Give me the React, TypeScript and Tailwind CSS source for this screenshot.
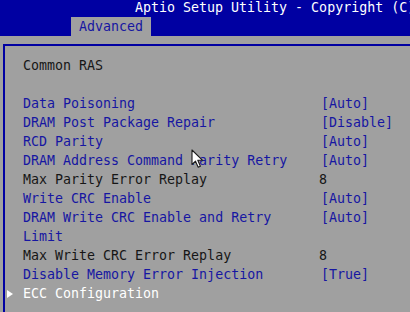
import React from "react";

type Row = {
    label: string;
    value?: string;
    kind: "option" | "info" | "submenu";
};

const rows: Row[] = [
    { label: "Data Poisoning", value: "[Auto]", kind: "option" },
    { label: "DRAM Post Package Repair", value: "[Disable]", kind: "option" },
    { label: "RCD Parity", value: "[Auto]", kind: "option" },
    { label: "DRAM Address Command Parity Retry", value: "[Auto]", kind: "option" },
    { label: "Max Parity Error Replay", value: "8", kind: "info" },
    { label: "Write CRC Enable", value: "[Auto]", kind: "option" },
    { label: "DRAM Write CRC Enable and Retry Limit", value: "[Auto]", kind: "option" },
    { label: "Max Write CRC Error Replay", value: "8", kind: "info" },
    { label: "Disable Memory Error Injection", value: "[True]", kind: "option" },
    { label: "ECC Configuration", kind: "submenu" },
];

function Cursor() {
    return (
        <svg
            className="absolute left-[191px] top-[149px]"
            width="14"
            height="20"
            viewBox="0 0 14 20"
        >
            <path
                d="M1 1 L1 15.5 L4.5 12.2 L7.2 18.3 L9.4 17.3 L6.8 11.3 L11.6 11.3 Z"
                fill="#ffffff"
                stroke="#1a1a1a"
                strokeWidth="1.1"
                strokeLinejoin="round"
            />
        </svg>
    );
}

function SetupRow({ label, value, kind }: Row) {
    const labelColor =
        kind === "option" ? "text-[#1616a2]" : kind === "info" ? "text-[#161616]" : "text-white";
    return (
        <div className="flex">
            <div className="w-[18px] shrink-0 flex items-start">
                {kind === "submenu" && (
                    <span className="mt-[6px] ml-[2px] w-0 h-0 border-y-[4px] border-y-transparent border-l-[6px] border-l-white" />
                )}
            </div>
            <div className={`w-[272px] shrink-0 ${labelColor}`}>{label}</div>
            {value && (
                <div
                    className={
                        kind === "info" ? "ml-[24px] text-[#161616]" : "ml-[26px] text-[#1616a2]"
                    }
                >
                    {value}
                </div>
            )}
        </div>
    );
}

export default function App() {
    return (
        <div
            className="relative w-[410px] h-[312px] overflow-hidden bg-[#a0a0a0] text-[13.3px] leading-[19px]"
            style={{ fontFamily: '"DejaVu Sans Mono", "Liberation Mono", monospace' }}
        >
            <div className="h-[36px] bg-[#0000a2] flex flex-col">
                <div className="h-[17px] pl-[135px] leading-[16px] text-white whitespace-nowrap">
                    Aptio Setup Utility - Copyright (C) 2021 American Megatrends, Inc.
                </div>
                <div className="ml-[71px] w-[80px] h-[19px] bg-[#a0a0a0] pl-[8px] leading-[19px] text-[#1616a2]">
                    Advanced
                </div>
            </div>
            <div className="pt-[8px]">
                <div className="ml-[3px] h-[268px] border-l-2 border-t-2 border-[#0000a2] pt-[10px]">
                    <div className="pl-[18px] text-[#161616]">Common RAS</div>
                    <div className="h-[19px]" />
                    {rows.map((row) => (
                        <SetupRow key={row.label} {...row} />
                    ))}
                </div>
            </div>
            <Cursor />
        </div>
    );
}
